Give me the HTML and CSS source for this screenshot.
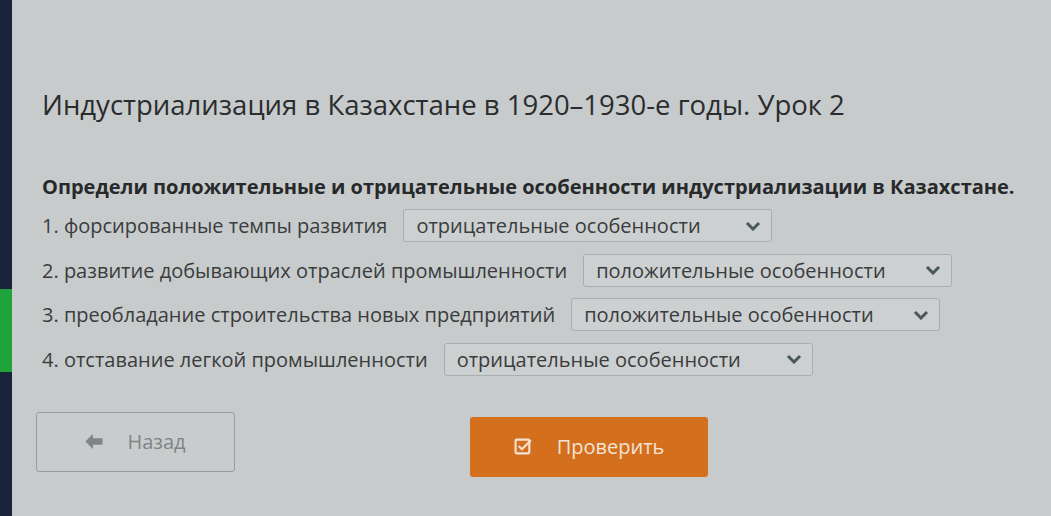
FILE: index.html
```html
<!DOCTYPE html>
<html lang="ru">
<head>
    <meta charset="UTF-8">
    <meta name="viewport" content="width=device-width, initial-scale=1.0">
    <title>Индустриализация в Казахстане. Урок 2</title>
    <link rel="stylesheet" href="styles.css">
</head>
<body>
    <div class="page">
        <div class="sidebar">
            <div class="sidebar-mark"></div>
        </div>

        <div class="content">
            <h1 class="lesson-title">Индустриализация в Казахстане в 1920–1930-е годы. Урок 2</h1>
            <p class="task">Определи положительные и отрицательные особенности индустриализации в Казахстане.</p>

            <!-- Rows with dropdowns -->
            <div class="rows">
                <div class="row">
                    <span class="row-label">1. форсированные темпы развития</span>
                    <div class="select">
                        <span>отрицательные особенности</span>
                        <svg class="chevron" viewBox="0 0 16 10" width="16" height="10"><path d="M2 2 L8 8 L14 2" /></svg>
                    </div>
                </div>
                <div class="row">
                    <span class="row-label">2. развитие добывающих отраслей промышленности</span>
                    <div class="select">
                        <span>положительные особенности</span>
                        <svg class="chevron" viewBox="0 0 16 10" width="16" height="10"><path d="M2 2 L8 8 L14 2" /></svg>
                    </div>
                </div>
                <div class="row">
                    <span class="row-label">3. преобладание строительства новых предприятий</span>
                    <div class="select">
                        <span>положительные особенности</span>
                        <svg class="chevron" viewBox="0 0 16 10" width="16" height="10"><path d="M2 2 L8 8 L14 2" /></svg>
                    </div>
                </div>
                <div class="row">
                    <span class="row-label">4. отставание легкой промышленности</span>
                    <div class="select">
                        <span>отрицательные особенности</span>
                        <svg class="chevron" viewBox="0 0 16 10" width="16" height="10"><path d="M2 2 L8 8 L14 2" /></svg>
                    </div>
                </div>
            </div>

            <!-- Buttons -->
            <div class="actions">
                <button class="btn btn-back">
                    <svg viewBox="0 0 16 14" width="18" height="15"><path d="M0 7 L7 0 L7 4 L16 4 L16 10 L7 10 L7 14 Z" /></svg>
                    Назад
                </button>
                <button class="btn btn-check">
                    <svg viewBox="0 0 18 18" width="19" height="19">
                        <rect x="1.5" y="2.5" width="13" height="13" rx="1" />
                        <path d="M4.5 8.5 L7.5 11.5 L16 3" />
                    </svg>
                    Проверить
                </button>
            </div>
        </div>
    </div>
</body>
</html>
```

FILE: styles.css
```css
body {
    font-family: "Open Sans", Arial, sans-serif;
    margin: 0;
    padding: 0;
    background-color: #c7cbcc;
    color: #2b2d2e;
}
.page {
    display: flex;
    height: 516px;
    overflow: hidden;
}
/* left dark strip */
.sidebar {
    width: 12px;
    flex-shrink: 0;
    background-color: #19243a;
    padding-top: 289px;
}
.sidebar-mark {
    height: 83px;
    background-color: #1ea33b;
}
.content {
    padding: 87px 0 0 30px;
    flex: 1;
}
.lesson-title {
    margin: 0;
    font-size: 27.5px;
    font-weight: 400;
    line-height: 36px;
    color: #2a2c2d;
}
.task {
    margin: 50px 0 0;
    font-size: 20px;
    font-weight: 700;
    line-height: 28px;
    color: #27292a;
    white-space: nowrap;
}
.rows {
    margin-top: 8px;
}
.row {
    display: flex;
    align-items: center;
    gap: 16px;
    margin-bottom: 11.5px;
    font-size: 20px;
    color: #3a3c3d;
    white-space: nowrap;
}
.select {
    display: flex;
    align-items: center;
    justify-content: space-between;
    width: 369px;
    height: 33px;
    box-sizing: border-box;
    padding: 0 10px 0 12px;
    border: 1px solid #a9adae;
    border-radius: 3px;
    background-color: #cdd0d1;
}
.chevron path {
    fill: none;
    stroke: #4a5858;
    stroke-width: 3;
}
.actions {
    display: flex;
    align-items: flex-start;
    gap: 235px;
    margin-top: 36px;
}
.btn {
    display: flex;
    align-items: center;
    justify-content: center;
    gap: 24px;
    font-family: "Open Sans", Arial, sans-serif;
    font-size: 20px;
    border-radius: 3px;
    cursor: pointer;
}
.btn-back {
    width: 199px;
    height: 60px;
    margin-left: -6px;
    background-color: #c9cccd;
    border: 1px solid #989c9d;
    color: #7e8586;
}
.btn-back svg path {
    fill: #7e8586;
}
.btn-check {
    width: 238px;
    height: 60px;
    margin-top: 5px;
    background-color: #d4701d;
    border: none;
    color: #f1e3d6;
}
.btn-check svg rect,
.btn-check svg path {
    fill: none;
    stroke: #f1e3d6;
    stroke-width: 2;
}
```
